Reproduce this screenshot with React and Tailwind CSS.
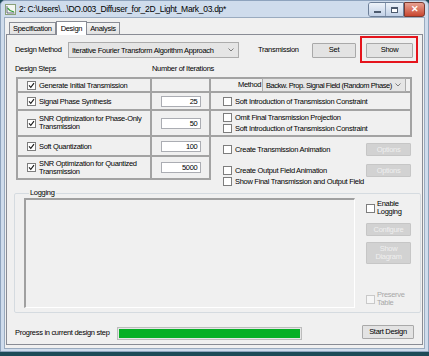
import React from 'react';

function Check({ checked, disabled }) {
    return (
        <span className={`w-[9px] h-[9px] border flex items-center justify-center shrink-0 ${disabled ? 'border-[#c9c9c9] bg-[#f6f6f6]' : 'border-[#7d7d7d] bg-white'}`}>
            {checked && (
                <svg width="7" height="7" viewBox="0 0 7 7">
                    <path d="M1 3.4 L2.8 5.4 L6 1.2" stroke="#1a1a1a" strokeWidth="1.1" fill="none" />
                </svg>
            )}
        </span>
    );
}

function CheckRow({ label, checked, disabled, className = '' }) {
    return (
        <div className={`flex items-center gap-[3px] ${className}`}>
            <Check checked={checked} disabled={disabled} />
            <span className={`leading-[9px] whitespace-nowrap ${disabled ? 'text-[#a8a8a8]' : ''}`}>{label}</span>
        </div>
    );
}

function Btn({ children, disabled, className = '' }) {
    return (
        <div className={`border flex items-center justify-center text-center leading-[8px] rounded-[1px] ${disabled ? 'border-[#c6c6c6] bg-[#d2d2d2] text-[#efefef]' : 'border-[#a9a9a9] bg-[#e3e3e3] text-black'} ${className}`}>
            {children}
        </div>
    );
}

function Combo({ text, className = '', textClass = '' }) {
    return (
        <div className={`flex items-center border border-[#acacac] bg-[#e5e5e5] pl-[3px] pr-[4px] shrink-0 ${className}`}>
            <span className={`flex-1 min-w-0 whitespace-nowrap overflow-hidden leading-[9px] ${textClass}`}>{text}</span>
            <svg width="6" height="4" viewBox="0 0 6 4" className="shrink-0 ml-[2px]">
                <path d="M0.5 0.5 L3 3 L5.5 0.5" stroke="#707070" strokeWidth="0.9" fill="none" />
            </svg>
        </div>
    );
}

function NumBox({ value }) {
    return (
        <div className="w-[40px] h-[11px] bg-white border border-[#abadb3] flex items-center justify-end pr-[2px] leading-[9px]">
            {value}
        </div>
    );
}

export default function App() {
    const cellL = 'border-l-2 border-r-2 border-b-2 border-[#a3a3a3]';
    const cellM = 'border-r-2 border-b-2 border-[#a3a3a3] flex items-center justify-center';
    const cellR = 'border-r-2 border-b-2 border-[#a3a3a3]';

    return (
        <div className="w-[429px] h-[356px] bg-[#1d4a57] overflow-hidden font-['Liberation_Sans',Arial,sans-serif] text-[7.5px] tracking-[-0.3px] text-black">
            <div className="h-[352px] bg-[#cfdcec] border border-[#8ea3bd] rounded-t-[5px] flex flex-col px-[3px] pb-[2px]">
                {/* Title bar */}
                <div className="h-[16px] flex items-center shrink-0">
                    <svg width="11" height="11" viewBox="0 0 11 11" className="ml-[1px]">
                        <rect x="0.5" y="0.5" width="10" height="10" fill="#f4f7f2" stroke="#8aa07a" />
                        <path d="M2 2 L2 9 L9.5 9" stroke="#446" strokeWidth="0.8" fill="none" />
                        <path d="M2.5 4 L5 6.5 L9 8" stroke="#2f9a35" strokeWidth="1.1" fill="none" />
                    </svg>
                    <span className="ml-[3px] text-[8.5px] leading-none">2: C:\Users\...\DO.003_Diffuser_for_2D_Light_Mark_03.dp*</span>
                    <div className="ml-auto flex items-start self-start mt-[1px]">
                        <div className="flex border border-[#6d7f98] rounded-l-[3px] overflow-hidden">
                            <div className="w-[17px] h-[13px] bg-gradient-to-b from-[#eef3fa] to-[#c2d1e6] flex items-end justify-center pb-[3px] border-r border-[#8a9bb3]">
                                <span className="w-[7px] h-[2px] bg-white border border-[#4c5a6e]" />
                            </div>
                            <div className="w-[17px] h-[13px] bg-gradient-to-b from-[#eef3fa] to-[#c2d1e6] flex items-center justify-center">
                                <span className="w-[7px] h-[6px] border border-[#4c5a6e] border-t-2 bg-white" />
                            </div>
                        </div>
                        <div className="w-[21px] h-[15px] bg-gradient-to-b from-[#e7a091] to-[#c8452f] border border-[#7a3a30] rounded-r-[3px] flex items-center justify-center text-white text-[9px] font-bold leading-none tracking-normal">
                            ✕
                        </div>
                    </div>
                </div>

                {/* Client area */}
                <div className="flex-1 bg-[#f0f0f0] border border-[#9aabbf] flex flex-col pt-[2px] px-[1px] pb-[3px]">
                    {/* Tabs */}
                    <div className="flex items-end h-[14px] pl-[3px] shrink-0">
                        <div className="h-[12px] px-[3px] border border-b-0 border-[#898c95] bg-gradient-to-b from-[#f3f3f3] to-[#e1e1e1] flex items-center leading-none">Specification</div>
                        <div className="h-[14px] px-[4px] border border-b-0 border-[#898c95] bg-white flex items-center leading-none relative top-[1px] z-10">Design</div>
                        <div className="h-[12px] px-[3px] border border-b-0 border-l-0 border-[#898c95] bg-gradient-to-b from-[#f3f3f3] to-[#e1e1e1] flex items-center leading-none">Analysis</div>
                    </div>

                    {/* Tab page */}
                    <div className="flex-1 border border-[#898c95] bg-[#f0f0f0] pl-[8px] flex flex-col">
                        {/* Design method row */}
                        <div className="flex items-center h-[16px] mt-[7px]">
                            <span className="w-[53px] leading-none whitespace-nowrap">Design Method</span>
                            <Combo text="Iterative Fourier Transform Algorithm Approach" className="w-[171px] h-[16px]" />
                            <span className="ml-[19px] w-[54px] leading-none">Transmission</span>
                            <Btn className="w-[44px] h-[15px]">Set</Btn>
                            <div className="relative ml-[10px]">
                                <Btn className="w-[47px] h-[15px]">Show</Btn>
                                <div className="absolute left-[-6px] top-[-7px] right-[-5px] bottom-[-5px] border-2 border-[#e5141c]" />
                            </div>
                        </div>

                        {/* Column headers */}
                        <div className="flex items-center h-[10px] mt-[6px]">
                            <span className="w-[137px] leading-none">Design Steps</span>
                            <span className="leading-none">Number of Iterations</span>
                        </div>

                        {/* Steps table */}
                        <div className="grid grid-cols-[136px_59px_201px] grid-rows-[16px_18px_26px_20px_23px] mt-[3px] ml-[1px]">
                            <div className={`${cellL} border-t-2 flex items-center pl-[9px]`}>
                                <CheckRow checked label="Generate Initial Transmission" />
                            </div>
                            <div className={`${cellM} border-t-2`} />
                            <div className={`${cellR} border-t-2 flex items-center pl-[27px]`}>
                                <span className="leading-none w-[24px] whitespace-nowrap">Method</span>
                                <Combo text="Backw. Prop. Signal Field (Random Phase)" className="w-[144px] h-[14px] pl-[2px]" textClass="tracking-[-0.45px]" />
                            </div>

                            <div className={`${cellL} flex items-center pl-[9px]`}>
                                <CheckRow checked label="Signal Phase Synthesis" />
                            </div>
                            <div className={cellM}><NumBox value="25" /></div>
                            <div className={`${cellR} flex items-center pl-[12px]`}>
                                <CheckRow label="Soft Introduction of Transmission Constraint" />
                            </div>

                            <div className={`${cellL} flex items-center pl-[9px]`}>
                                <div className="flex items-center gap-[3px]">
                                    <Check checked />
                                    <span className="leading-[8px] whitespace-nowrap">SNR Optimization for Phase-Only<br />Transmission</span>
                                </div>
                            </div>
                            <div className={cellM}><NumBox value="50" /></div>
                            <div className={`${cellR} flex flex-col justify-center gap-[2px] pl-[12px]`}>
                                <CheckRow label="Omit Final Transmission Projection" />
                                <CheckRow label="Soft Introduction of Transmission Constraint" />
                            </div>

                            <div className={`${cellL} flex items-center pl-[9px]`}>
                                <CheckRow checked label="Soft Quantization" />
                            </div>
                            <div className={cellM}><NumBox value="100" /></div>
                            <div className="row-span-2 flex flex-col pl-[12px] pt-[6px]">
                                <div className="flex items-center h-[13px]">
                                    <CheckRow label="Create Transmission Animation" className="flex-1" />
                                    <Btn disabled className="w-[45px] h-[13px] mr-[1px]">Options</Btn>
                                </div>
                                <div className="flex items-center h-[13px] mt-[8px]">
                                    <CheckRow label="Create Output Field Animation" className="flex-1" />
                                    <Btn disabled className="w-[45px] h-[13px] mr-[1px]">Options</Btn>
                                </div>
                                <div className="flex items-center h-[10px]">
                                    <CheckRow label="Show Final Transmission and Output Field" />
                                </div>
                            </div>

                            <div className={`${cellL} flex items-center pl-[9px]`}>
                                <div className="flex items-center gap-[3px]">
                                    <Check checked />
                                    <span className="leading-[8px] whitespace-nowrap">SNR Optimization for Quantized<br />Transmission</span>
                                </div>
                            </div>
                            <div className={cellM}><NumBox value="5000" /></div>
                        </div>

                        {/* Logging group */}
                        <fieldset className="border border-[#d5dbe0] rounded-[2px] w-[407px] ml-[-1px] mt-[8px] pl-[9px] pb-[4px] flex">
                            <legend className="ml-[5px] px-[1px] leading-[10px]">Logging</legend>
                            <div className="flex w-full">
                                <div className="w-[331px] h-[110px] border-t-2 border-l-2 border-t-[#a0a0a0] border-l-[#a0a0a0] border-b border-r border-b-white border-r-white bg-[#f0f0f0]" />
                                <div className="ml-[11px] w-[46px] flex flex-col">
                                    <div className="flex items-center gap-[2px] mt-[2px]">
                                        <Check />
                                        <span className="leading-[8px]">Enable<br />Logging</span>
                                    </div>
                                    <Btn disabled className="w-[45px] h-[13px] mt-[7px]">Configure</Btn>
                                    <Btn disabled className="w-[45px] h-[22px] mt-[6px]">Show<br />Diagram</Btn>
                                    <div className="flex items-center gap-[2px] mt-auto mb-[1px]">
                                        <Check disabled />
                                        <span className="leading-[8px] text-[#a8a8a8]">Preserve<br />Table</span>
                                    </div>
                                </div>
                            </div>
                        </fieldset>

                        {/* Progress row */}
                        <div className="flex items-start mt-[12px]">
                            <span className="w-[102px] mt-[4px] leading-none whitespace-nowrap">Progress in current design step</span>
                            <div className="w-[185px] h-[13px] mt-[2px] border border-[#bcbcbc] bg-[#e6e6e6] p-[1px]">
                                <div className="h-full w-full bg-[#06b025]" />
                            </div>
                            <Btn className="ml-[60px] w-[52px] h-[14px]">Start Design</Btn>
                        </div>
                    </div>
                </div>
            </div>
        </div>
    );
}
